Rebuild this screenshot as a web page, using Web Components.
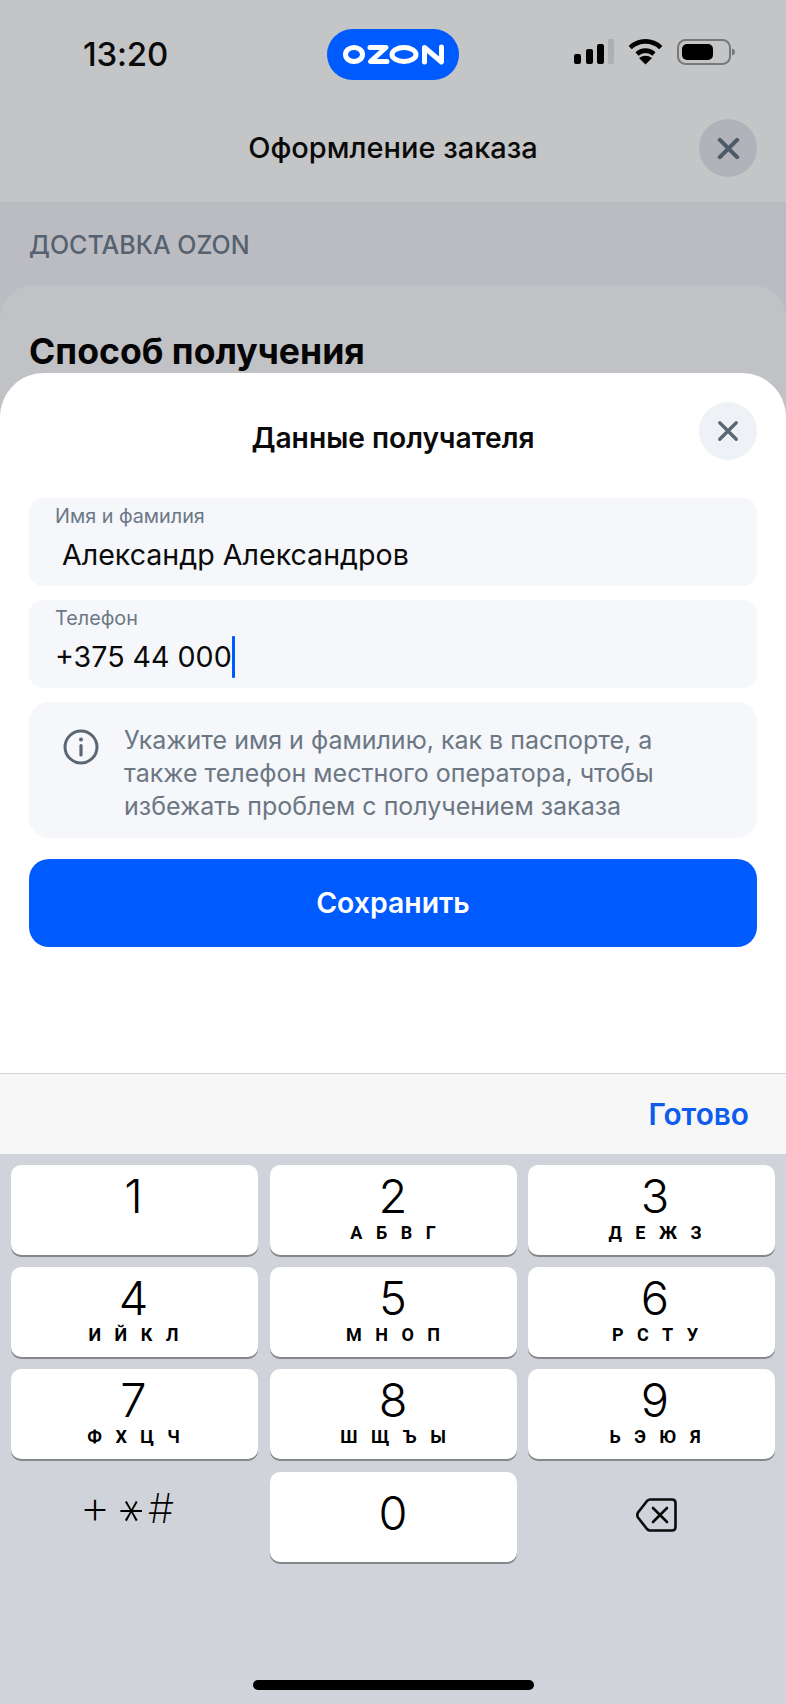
<!DOCTYPE html>
<html lang="ru"><head><meta charset="utf-8"><title>Данные получателя</title>
<style>
html,body{margin:0;padding:0;background:#c4c5c7;font-family:Inter,"Noto Sans",sans-serif;}
</style></head><body>
<x-app></x-app>
<script>
function def(name, css, html){
  customElements.define(name, class extends HTMLElement{
    constructor(){super();const r=this.attachShadow({mode:'open'});
      r.innerHTML='<style>'+css+'</style>'+(typeof html==='function'?html(this):html);}
  });
}
const xIcon=(c,w,s)=>`<svg width="${s}" height="${s}" viewBox="0 0 24 24" fill="none" stroke="${c}" stroke-width="${w}" stroke-linecap="round"><path d="M3 3 21 21M21 3 3 21"/></svg>`;

def('x-close','\
:host{display:flex;width:58px;height:58px;border-radius:50%;align-items:center;justify-content:center;background:var(--bg);flex:none}\
svg{display:block}','<slot></slot>');

def('x-status-bar',`
:host{display:grid;grid-template-columns:1fr 132px 1fr;height:104px;box-sizing:border-box;align-items:start;padding-top:29px}
.time{font:500 33px/38px Inter,sans-serif;color:#0a0a0a;margin:6px 0 0 83px;letter-spacing:-.2px}
.pill{height:51px;border-radius:26px;background:#005bff;display:flex;align-items:center;justify-content:center}
.icons{display:flex;align-items:flex-start;margin-top:10px;gap:14px;justify-self:end;padding-right:51px}
svg{display:block}
`,`<div class="time">13:20</div>
<div class="pill"><svg width="101" height="21" viewBox="0 0 101 21" fill="none" stroke="#fff" stroke-width="5"><ellipse cx="11" cy="10.5" rx="8.5" ry="7"/><path d="M27 3.5H43L27.5 17.5H44" stroke-linejoin="round" stroke-linecap="round"/><ellipse cx="61" cy="10.5" rx="12" ry="7"/><path d="M81.5 18V3.5L98.5 18V3" stroke-linejoin="round" stroke-linecap="round"/></svg></div>
<div class="icons">
<svg width="40" height="26" viewBox="0 0 40 26"><rect x="0" y="15" width="7" height="10" rx="2"/><rect x="12" y="10" width="7" height="15" rx="2"/><rect x="23" y="5" width="7" height="20" rx="2"/><rect x="34" y="0" width="6" height="25" rx="1.5" fill="#aeafb0"/></svg>
<svg width="35" height="26" viewBox="0 0 35 26" fill="none" stroke="#000" stroke-width="4.6"><path d="M2.2 8.6A22 22 0 0 1 32.8 8.6"/><path d="M9 15A12.5 12.5 0 0 1 26 15"/><path d="M17.5 25.4 11 19Q17.5 14.5 24 19Z" fill="#000" stroke="none"/></svg>
<svg width="58" height="26" viewBox="0 0 58 26"><rect x="1" y="1" width="52" height="24" rx="7.5" fill="none" stroke="#77787a" stroke-width="2"/><rect x="5" y="5" width="31" height="16" rx="5" fill="#000"/><path d="M55 9.5Q58 10.5 58 13T55 16.5Z" fill="#77787a"/></svg>
</div>`);

def('x-nav-header',`
:host{display:flex;height:98px;box-sizing:border-box;align-items:center;justify-content:center;position:relative}
.t{font:550 29px/36px Inter,sans-serif;color:#0a0a0a;margin-top:-11px}
x-close{position:absolute;right:29px;top:15px}
`,`<div class="t"><slot></slot></div><x-close style="--bg:#b0b3ba">${xIcon('#4f5a68',4.4,23)}</x-close>`);

def('x-page-bg',`
:host{display:block;background:#bbbcc1;height:1502px}
.lab{font:500 25px/32px Inter,sans-serif;color:#566170;padding:27px 29px 0;height:56px}
.card{background:#c1c2c5;border-radius:34px 34px 0 0;padding:45px 29px 0;height:400px}
h2{margin:0;font:700 35.6px/44px Inter,sans-serif;color:#050505}
`,`<div class="lab">ДОСТАВКА OZON</div><div class="card"><h2>Способ получения</h2></div>`);

def('x-field',`
:host{display:block;height:88px;box-sizing:border-box;background:#f5f7fb;border-radius:14px;padding:5px 26px 0}
.l{font:400 19.8px/26px Inter,sans-serif;color:#6d7785}
.v{display:flex;align-items:center;font:400 28.6px/42px Inter,sans-serif;color:#0a0a0a;margin-top:5px;padding-left:var(--vp,0)}
.c{width:3px;height:42px;background:#005bff;display:var(--caret,none);border-radius:1px;flex:none}
`,f=>`<div class="l">${f.getAttribute('label')}</div><div class="v"><slot></slot><span class="c"></span></div>`);

def('x-note',`
:host{display:flex;box-sizing:border-box;height:136px;background:#f5f7fb;border-radius:20px;padding:22px 0 0 34px;gap:25px;align-items:flex-start}
svg{flex:none;margin-top:5px;display:block}
p{margin:0;width:545px;font:400 25px/33px Inter,sans-serif;color:#6b7683}
`,`<svg width="36" height="36" viewBox="0 0 36 36" fill="none" stroke="#5b6673"><circle cx="18" cy="18" r="16" stroke-width="3"/><path d="M18 16.5V26" stroke-width="3.2" stroke-linecap="round"/><circle cx="18" cy="10.6" r="2" fill="#5b6673" stroke="none"/></svg><p><slot></slot></p>`);

def('x-button',`
:host{display:flex;height:88px;border-radius:20px;background:#005bff;color:#fff;align-items:center;justify-content:center;font:600 28.4px/36px Inter,sans-serif}
`,`<slot></slot>`);

def('x-key',`
:host{display:flex;flex-direction:column;align-items:center;height:90px;box-sizing:border-box;border-radius:10px;background:#fff;box-shadow:0 2px 0 #85878b;color:#000;padding-top:5px}
:host([col="1"]){padding-right:2px}
:host([col="3"]){padding-left:7px}
.d{font:300 47px/52px Inter,sans-serif}
.s{font:700 18px/22px Roboto,sans-serif;letter-spacing:13.5px;margin-right:-13.5px;white-space:nowrap}
:host([solo]) {padding-top:15px}
`,k=>`<div class="d">${k.getAttribute('d')||''}</div><div class="s">${k.getAttribute('s')||''}</div>`);

def('x-keypad',`
:host{display:block;background:#d0d3d9;height:550px;box-sizing:border-box;padding:11px 11px 0 11px;position:relative}
.g{display:grid;grid-template-columns:repeat(3,1fr);gap:12.2px 11.5px}
.sym{display:flex;align-items:center;padding-left:72px;height:78px;color:#000;gap:9px}
.sym span{display:flex;width:24px;height:40px;align-items:center;justify-content:center;line-height:40px}
.p{font:200 48px/40px Inter,sans-serif;transform:translateY(-4px)}
.a{font:200 54px/40px Inter,sans-serif;transform:translate(-6px,0) rotate(90deg)}
.h{font:200 41px/40px Inter,sans-serif;transform:translateY(-3px)}
.bk{display:flex;justify-content:center;padding:26px 0 0 10px;height:90px;box-sizing:border-box}
.hm{position:absolute;left:253px;top:526px;width:281px;height:10px;border-radius:5px;background:#000}
`,`<div class="g">
<x-key col="1" d="1"></x-key><x-key d="2" s="АБВГ"></x-key><x-key col="3" d="3" s="ДЕЖЗ"></x-key>
<x-key col="1" d="4" s="ИЙКЛ"></x-key><x-key d="5" s="МНОП"></x-key><x-key col="3" d="6" s="РСТУ"></x-key>
<x-key col="1" d="7" s="ФХЦЧ"></x-key><x-key d="8" s="ШЩЪЫ"></x-key><x-key col="3" d="9" s="ЬЭЮЯ"></x-key>
<div class="sym"><span class="p">+</span><span class="a">*</span><span class="h">#</span></div>
<x-key d="0" solo></x-key>
<div class="bk"><svg width="41" height="34" viewBox="0 0 41 34" fill="none" stroke="#0a0a0a" stroke-width="2.6" stroke-linejoin="round" stroke-linecap="round"><path d="M14 1.5H36Q39.5 1.5 39.5 5V29Q39.5 32.5 36 32.5H14Q12.5 32.5 11 31L2 19.5Q.6 17 2 14.5L11 3Q12.5 1.5 14 1.5Z"/><path d="M17 10 31 24M31 10 17 24"/></svg></div>
</div><div class="hm"></div>`);

def('x-toolbar',`
:host{display:flex;height:81px;box-sizing:border-box;background:#f7f7f7;border-top:1px solid #d5d6d8;justify-content:flex-end;align-items:center;padding-right:37px;font:600 29.8px/36px Inter,sans-serif;color:#0d5ced}
`,`<slot></slot>`);

def('x-sheet',`
:host{position:absolute;left:0;right:0;top:373px;bottom:0;background:#fff;border-radius:44px 44px 0 0;display:flex;flex-direction:column;overflow:hidden}
.h{display:flex;justify-content:center;position:relative;height:125px;box-sizing:border-box;padding-top:47px;flex:none}
.t{font:600 28.2px/36px Inter,sans-serif;color:#0a0a0a}
x-close{position:absolute;right:29px;top:29px}
.b{display:flex;flex-direction:column;padding:0 29px;gap:14px;flex:none}
.kb{margin-top:auto}
`,s=>`<div class="h"><div class="t">${s.getAttribute('heading')}</div><x-close style="--bg:#eef1f6">${xIcon('#5b6673',3.6,22)}</x-close></div>
<div class="b"><slot></slot></div><div class="kb"><x-toolbar>Готово</x-toolbar><x-keypad></x-keypad></div>`);

def('x-app',`
:host{display:block;position:relative;width:786px;height:1704px;overflow:hidden;background:#c4c5c7}
`,`<x-status-bar></x-status-bar><x-nav-header>Оформление заказа</x-nav-header><x-page-bg></x-page-bg>
<x-sheet heading="Данные получателя">
<x-field label="Имя и фамилия" style="--vp:7px">Александр Александров</x-field>
<x-field label="Телефон" style="--caret:block">+375 44 000</x-field>
<x-note>Укажите имя и фамилию, как в паспорте, а также телефон местного оператора, чтобы избежать проблем с получением заказа</x-note>
<x-button style="margin-top:7px">Сохранить</x-button>
</x-sheet>`);
</script>
</body></html>
